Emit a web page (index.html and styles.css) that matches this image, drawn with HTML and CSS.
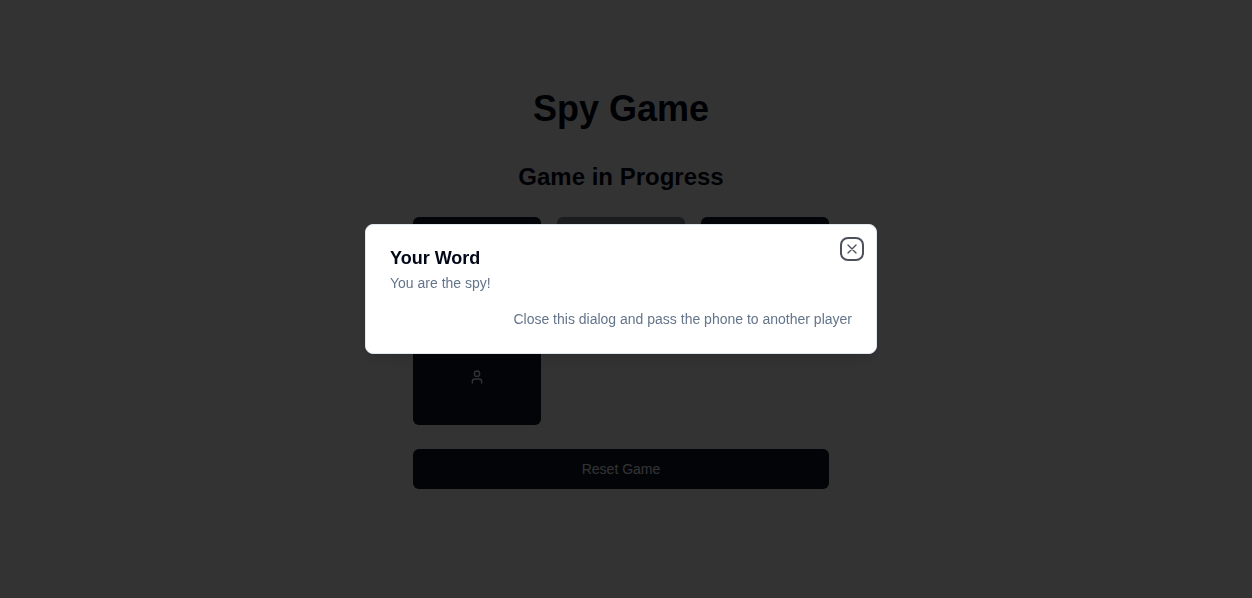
FILE: index.html
```html
<!DOCTYPE html>
<html lang="en">
<head>
<meta charset="utf-8">
<meta name="viewport" content="width=device-width, initial-scale=1">
<title>Spy Game</title>
<link rel="stylesheet" href="styles.css">
</head>
<body>
<svg class="sprite" aria-hidden="true">
  <symbol id="user" viewBox="0 0 24 24">
    <path d="M19 21v-2a4 4 0 0 0-4-4H9a4 4 0 0 0-4 4v2"/>
    <circle cx="12" cy="7" r="4"/>
  </symbol>
</svg>
<main class="page">
  <div class="game">
    <h1 class="game-title">Spy Game</h1>
    <h2 class="game-status">Game in Progress</h2>
    <div class="cards">
      <button class="button card" type="button" aria-label="Player 1"><svg class="icon"><use href="#user"/></svg></button>
      <button class="button card" type="button" aria-label="Player 2" disabled><svg class="icon"><use href="#user"/></svg></button>
      <button class="button card" type="button" aria-label="Player 3"><svg class="icon"><use href="#user"/></svg></button>
      <button class="button card" type="button" aria-label="Player 4"><svg class="icon"><use href="#user"/></svg></button>
    </div>
    <button class="button reset" type="button">Reset Game</button>
  </div>
</main>
<div class="overlay"></div>
<div class="dialog-layer">
  <div class="dialog" role="dialog" aria-modal="true" aria-labelledby="dialog-title" aria-describedby="dialog-text">
    <div class="dialog-header">
      <h2 class="dialog-title" id="dialog-title">Your Word</h2>
      <p class="dialog-text" id="dialog-text">You are the spy!</p>
    </div>
    <div class="dialog-footer">
      <p class="dialog-text">Close this dialog and pass the phone to another player</p>
    </div>
    <button class="dialog-close" type="button" aria-label="Close">
      <svg class="icon" viewBox="0 0 24 24"><path d="M18 6 6 18M6 6l12 12"/></svg>
    </button>
  </div>
</div>
</body>
</html>
```
FILE: styles.css
```css
:root {
  --foreground: #020817;
  --primary: #0f172a;
  --primary-text: #f8fafc;
  --muted: #64748b;
  --border: #e2e8f0;
  --edge-right: 10px;
  --edge-bottom: 20px;
}

*, *::before, *::after {
  box-sizing: border-box;
}

body, h1, h2, p {
  margin: 0;
}

body {
  background: #fff;
  color: var(--foreground);
  font-family: "Liberation Sans", Arial, sans-serif;
  font-size: 14px;
  line-height: 20px;
}

.sprite {
  position: absolute;
  width: 0;
  height: 0;
}

.page {
  display: flex;
  align-items: center;
  justify-content: center;
  min-height: 100vh;
  padding: 0 var(--edge-right) var(--edge-bottom) 0;
}

.game {
  width: 100%;
  max-width: 448px;
  padding: 0 16px;
}

.game-title {
  margin-bottom: 32px;
  font-size: 36px;
  line-height: 40px;
  text-align: center;
}

.game-status {
  margin-bottom: 24px;
  font-size: 24px;
  line-height: 32px;
  text-align: center;
}

.cards {
  display: grid;
  grid-template-columns: repeat(3, 1fr);
  gap: 16px;
  margin-bottom: 24px;
}

.button {
  display: flex;
  align-items: center;
  justify-content: center;
  padding: 8px 16px;
  border: 0;
  border-radius: 6px;
  background: var(--primary);
  color: var(--primary-text);
  font: inherit;
  cursor: pointer;
}

.button:disabled {
  opacity: 0.5;
  cursor: default;
}

.card {
  height: 96px;
}

.reset {
  width: 100%;
  height: 40px;
}

.icon {
  display: block;
  width: 16px;
  height: 16px;
  fill: none;
  stroke: currentColor;
  stroke-width: 2;
  stroke-linecap: round;
  stroke-linejoin: round;
}

.overlay {
  position: fixed;
  inset: 0;
  background: rgb(0 0 0 / 80%);
}

.dialog-layer {
  position: fixed;
  inset: 0 var(--edge-right) var(--edge-bottom) 0;
  display: flex;
  align-items: center;
  justify-content: center;
}

.dialog {
  position: relative;
  display: grid;
  gap: 16px;
  width: 100%;
  max-width: 512px;
  padding: 24px;
  border: 1px solid var(--border);
  border-radius: 8px;
  background: #fff;
  box-shadow: 0 10px 15px -3px rgb(0 0 0 / 10%), 0 4px 6px -4px rgb(0 0 0 / 10%);
}

.dialog-header {
  display: grid;
  gap: 6px;
}

.dialog-title {
  font-size: 18px;
  line-height: 18px;
}

.dialog-text {
  color: var(--muted);
}

.dialog-footer {
  display: flex;
  justify-content: flex-end;
}

.dialog-close {
  position: absolute;
  top: 16px;
  right: 16px;
  padding: 0;
  border: 0;
  border-radius: 4px;
  background: transparent;
  color: var(--foreground);
  opacity: 0.7;
  cursor: pointer;
}

.dialog-close::before {
  content: "";
  position: absolute;
  inset: -4px;
  border: 2px solid var(--foreground);
  border-radius: 8px;
}
```
